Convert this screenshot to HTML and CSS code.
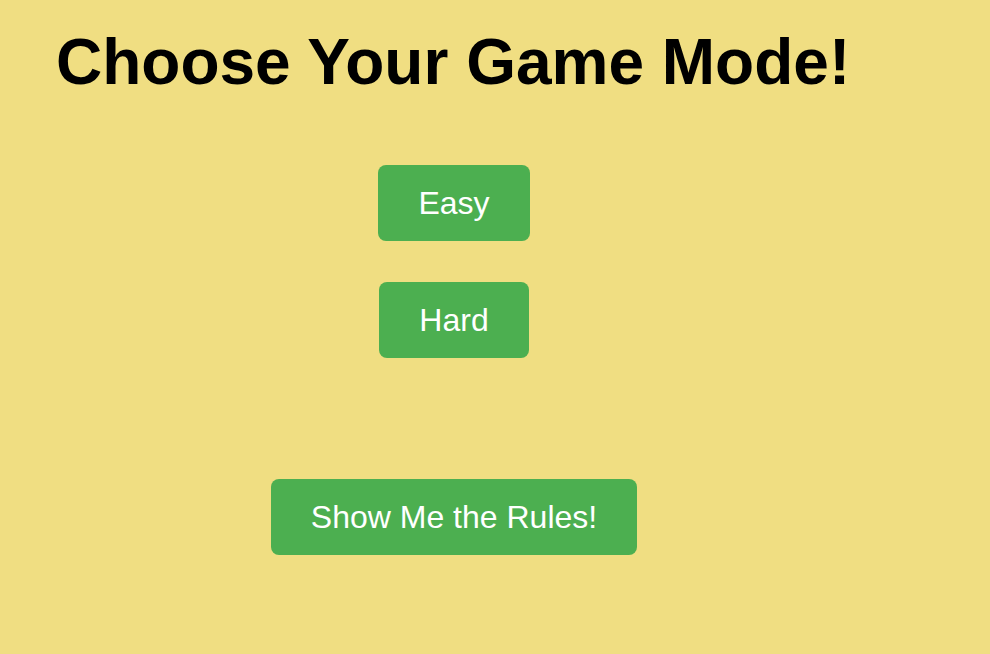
FILE: index.html
```html
<!DOCTYPE html>
<html lang="en">
<head>
<meta charset="utf-8">
<title>Choose Your Game Mode</title>
<link rel="stylesheet" href="styles.css">
</head>
<body>
<main class="page">
  <h1 class="title">Choose Your Game Mode!</h1>
  <div class="modes">
    <button class="btn">Easy</button>
    <button class="btn">Hard</button>
  </div>
  <div class="rules">
    <button class="btn">Show Me the Rules!</button>
  </div>
</main>
</body>
</html>
```

FILE: styles.css
```css
html, body {
  margin: 0;
  padding: 0;
  background: #f0de82;
  font-family: "Liberation Sans", Arial, sans-serif;
}

.page {
  width: 908px;
  display: flex;
  flex-direction: column;
  align-items: center;
}

.title {
  align-self: flex-start;
  margin: 25px 0 0 56px;
  font-size: 64px;
  line-height: 74px;
  font-weight: 700;
  color: #000;
}

.modes {
  margin-top: 66px;
  display: flex;
  flex-direction: column;
  align-items: center;
  gap: 41px;
}

.rules {
  margin-top: 121px;
}

.btn {
  font-family: "Liberation Sans", Arial, sans-serif;
  font-size: 32px;
  line-height: 36px;
  color: #fff;
  background: #4caf50;
  border: none;
  border-radius: 8px;
  padding: 20px 40px 20px;
  cursor: pointer;
}
```
